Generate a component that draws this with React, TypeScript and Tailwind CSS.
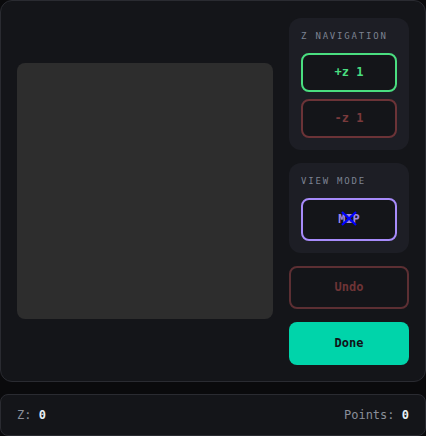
import React from 'react';

const mono = { fontFamily: '"DejaVu Sans Mono", "Liberation Mono", monospace' };

function SectionLabel({ children }: { children: React.ReactNode }) {
  return (
    <div className="text-[9px] leading-3 tracking-[0.2em] text-[#7c8291] mb-[11px]">{children}</div>
  );
}

export default function App() {
  return (
    <div className="w-[426px] h-[436px] bg-[#0a0a0c] flex flex-col gap-3 overflow-hidden" style={mono}>
      {/* Main panel */}
      <div className="h-[382px] shrink-0 rounded-xl border border-[#2a2b31] bg-[#141519] p-4 flex items-center gap-4">
        <div className="w-[256px] h-[256px] rounded-lg bg-[#2d2d2d]" />

        <div className="w-[120px] flex flex-col gap-[13px]">
          {/* Z navigation */}
          <div className="rounded-xl bg-[#1d1e25] p-3">
            <SectionLabel>Z NAVIGATION</SectionLabel>
            <div className="flex flex-col gap-[7px]">
              <button className="h-[39px] rounded-lg border-2 border-[#4ade80] bg-[#141519] text-[12px] font-bold text-[#4ade80]">
                +z 1
              </button>
              <button className="h-[39px] rounded-lg border-2 border-[#6b3337] bg-[#141519] text-[12px] font-bold text-[#7a3a3c]">
                -z 1
              </button>
            </div>
          </div>

          {/* View mode */}
          <div className="rounded-xl bg-[#1d1e25] p-3">
            <SectionLabel>VIEW MODE</SectionLabel>
            <button className="w-full h-[43px] rounded-lg border-2 border-[#a78bfa] bg-[#141519] text-[12px] font-bold text-[#9d86e6] flex items-center justify-center">
              <span className="relative">
                MIP
                <svg className="absolute left-[3px] top-[1px]" width="16" height="15" viewBox="0 0 16 15">
                  <path d="M1 1 L15 14 M15 1 L1 14" stroke="#0000ff" strokeWidth="2.2" />
                </svg>
              </span>
            </button>
          </div>

          <button className="h-[43px] rounded-lg border-2 border-[#5c2f33] bg-[#141519] text-[12px] font-bold text-[#6e3436]">
            Undo
          </button>
          <button className="h-[43px] rounded-lg bg-[#00d4aa] text-[12px] font-bold text-[#111317]">
            Done
          </button>
        </div>
      </div>

      {/* Status bar */}
      <div className="h-[42px] shrink-0 rounded-lg border border-[#2a2b31] bg-[#141519] px-4 flex items-center justify-between text-[12px]">
        <span className="text-[#8a8f99]">
          Z: <span className="font-bold text-[#e8f0f4]">0</span>
        </span>
        <span className="text-[#8a8f99]">
          Points: <span className="font-bold text-[#e8f0f4]">0</span>
        </span>
      </div>
    </div>
  );
}
